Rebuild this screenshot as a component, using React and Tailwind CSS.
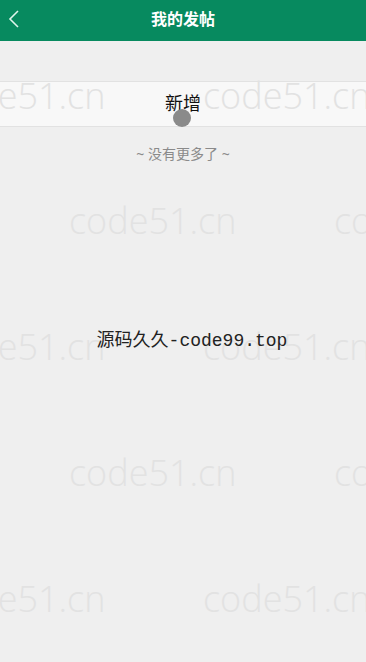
import React from 'react';

const marks = [
    { top: 78, left: -62 }, { top: 78, left: 203 },
    { top: 203, left: 69 }, { top: 203, left: 334 },
    { top: 329, left: -62 }, { top: 329, left: 203 },
    { top: 455, left: 69 }, { top: 455, left: 334 },
    { top: 581, left: -62 }, { top: 581, left: 203 },
];

const App = () => {
    return (
        <div className="relative w-full h-[662px] overflow-hidden bg-[#efefef] font-['Noto_Sans','Noto_Sans_CJK_SC',sans-serif]">
            <header className="relative h-[41px] bg-[#078a5f] flex items-center justify-center">
                <svg className="absolute left-[7px] top-[9px]" width="14" height="20" viewBox="0 0 14 20" fill="none">
                    <path d="M11 2 L3 10 L11 18" stroke="#dff5ec" strokeWidth="1.6" />
                </svg>
                <h1 className="text-white text-[16px] font-bold leading-none -mt-[4px]">我的发帖</h1>
            </header>

            <div className="mt-[40px] h-[46px] bg-[#f8f8f8] border-y border-[#e2e2e2] flex items-center justify-center relative">
                <span className="text-[18px] text-[#111] leading-none -mt-[2px]">新增</span>
                <span className="absolute left-[173px] top-[27px] w-[18px] h-[18px] rounded-full bg-[#8a8a8a]" />
            </div>

            <p className="mt-[20px] text-center text-[14px] text-[#8a8a8a] leading-none">~ 没有更多了 ~</p>

            <p className="relative z-10 mt-[171px] pl-[18px] text-center text-[18px] text-[#222] leading-none font-['Liberation_Mono','Noto_Sans_CJK_SC',monospace]">
                源码久久-code99.top
            </p>

            {marks.map((m, i) => (
                <div
                    key={i}
                    className="absolute pointer-events-none text-[36px] font-light leading-none text-[#e2e2e2] font-['Open_Sans',sans-serif] whitespace-nowrap"
                    style={{ top: m.top, left: m.left }}
                >
                    code51.cn
                </div>
            ))}
        </div>
    );
};

export default App;
